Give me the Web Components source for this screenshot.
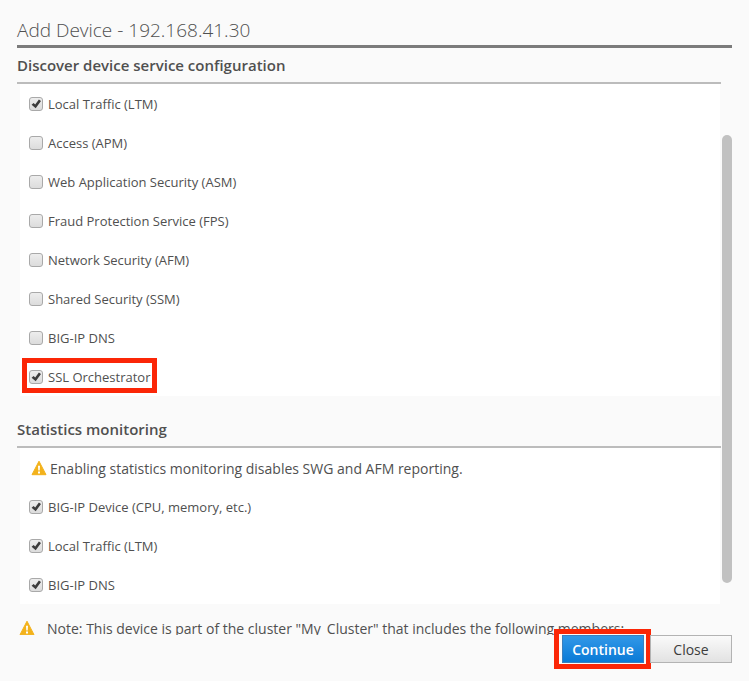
<!DOCTYPE html>
<html lang="en">
<head>
<meta charset="utf-8">
<title>Add Device</title>
<style>
  body {
    margin: 0;
    background: #fafafa;
    color: #505050;
    font-family: "Open Sans", "Noto Sans", sans-serif;
    font-size: 13px;
  }
</style>
</head>
<body>
  <device-dialog heading="Add Device - 192.168.41.30">
    <option-section heading="Discover device service configuration">
      <check-option checked>Local Traffic (LTM)</check-option>
      <check-option>Access (APM)</check-option>
      <check-option>Web Application Security (ASM)</check-option>
      <check-option>Fraud Protection Service (FPS)</check-option>
      <check-option>Network Security (AFM)</check-option>
      <check-option>Shared Security (SSM)</check-option>
      <check-option>BIG-IP DNS</check-option>
      <check-option checked marked>SSL Orchestrator</check-option>
    </option-section>
    <option-section heading="Statistics monitoring">
      <warning-note inset>Enabling statistics monitoring disables SWG and AFM reporting.</warning-note>
      <check-option checked>BIG-IP Device (CPU, memory, etc.)</check-option>
      <check-option checked>Local Traffic (LTM)</check-option>
      <check-option checked>BIG-IP DNS</check-option>
    </option-section>
    <warning-note>Note: This device is part of the cluster "My_Cluster" that includes the following members:</warning-note>
    <dialog-button slot="actions" primary marked>Continue</dialog-button>
    <dialog-button slot="actions">Close</dialog-button>
  </device-dialog>

<script>
class DeviceDialog extends HTMLElement {
  constructor() {
    super();
    this.attachShadow({ mode: "open" });
    this.shadowRoot.innerHTML = `
    <style>
        :host {
            display: flex;
            flex-direction: column;
            box-sizing: border-box;
            height: 100vh;
            padding: 16px 17px 18px;
        }
        h1 {
            margin: 0;
            font-size: 19px;
            line-height: 29px;
            font-weight: 300;
            white-space: nowrap;
            border-bottom: 3px solid #7b7b7b;
        }
        .body {
            flex: 1;
            min-height: 0;
            display: flex;
            gap: 1px;
        }
        .content {
            flex: 1;
            min-width: 0;
            overflow: hidden;
        }
        .track {
            width: 10px;
            display: flex;
            padding: 87px 0 52px;
        }
        .thumb {
            flex: 1;
            border-radius: 5px;
            background: #c1c1c1;
        }
        footer {
            display: flex;
            justify-content: flex-end;
            gap: 6px;
        }
    </style>
    <h1></h1>
    <div class="body">
        <div class="content"><slot></slot></div>
        <div class="track"><div class="thumb"></div></div>
    </div>
    <footer><slot name="actions"></slot></footer>
`;
    this.shadowRoot.querySelector("h1").textContent = this.getAttribute("heading");
  }
}

class OptionSection extends HTMLElement {
  constructor() {
    super();
    this.attachShadow({ mode: "open" });
    this.shadowRoot.innerHTML = `
    <style>
        :host {
            display: block;
            margin-bottom: 16px;
        }
        h2 {
            margin: 0;
            font-size: 15px;
            line-height: 34px;
            font-weight: 600;
            border-bottom: 2px solid #bcbcbc;
        }
        .panel {
            margin: 0 1px 0 3px;
            padding-left: 9px;
            background: white;
        }
    </style>
    <h2></h2>
    <div class="panel"><slot></slot></div>
`;
    this.shadowRoot.querySelector("h2").textContent = this.getAttribute("heading");
  }
}

class CheckOption extends HTMLElement {
  constructor() {
    super();
    this.attachShadow({ mode: "open" });
    this.shadowRoot.innerHTML = `
    <style>
        :host {
            display: flex;
            align-items: center;
            height: 39px;
        }
        label {
            position: relative;
            display: flex;
            align-items: center;
            gap: 5px;
            line-height: 18px;
        }
        .box {
            display: grid;
        }
        .box > * {
            grid-area: 1 / 1;
        }
        input {
            appearance: none;
            box-sizing: border-box;
            width: 14px;
            height: 14px;
            margin: 0;
            border: 1px solid #a9a9a9;
            border-radius: 3px;
            background: linear-gradient(#ededed, #dcdcdc);
        }
        svg {
            width: 14px;
            height: 14px;
            pointer-events: none;
            visibility: hidden;
        }
        input:checked + svg {
            visibility: visible;
        }
        /* Red callout drawn around the row */
        :host([marked]) label::after {
            content: "";
            position: absolute;
            inset: -10px -7px -7px;
            border: 5px solid #fb2607;
        }
    </style>
    <label>
        <span class="box">
            <input type="checkbox">
            <svg viewBox="0 0 14 14"><path d="M2.6 7.8 4.6 6l1.6 1.6L9.9 2.4l2.1 1.5-5.3 7.4z" fill="#3c3c3c"/></svg>
        </span>
        <slot></slot>
    </label>
`;
    this.shadowRoot.querySelector("input").checked = this.hasAttribute("checked");
  }
}

class WarningNote extends HTMLElement {
  constructor() {
    super();
    this.attachShadow({ mode: "open" });
    this.shadowRoot.innerHTML = `
    <style>
        :host {
            display: flex;
            align-items: center;
            gap: 12px;
            padding-left: 2px;
            font-size: 14px;
            line-height: 18px;
            white-space: nowrap;
        }
        :host([inset]) {
            gap: 3px;
            height: 41px;
            margin-bottom: -2px;
        }
        svg {
            flex: none;
            width: 16px;
            height: 16px;
            margin-bottom: 2px;
        }
    </style>
    <svg viewBox="0 0 16 16" aria-hidden="true">
        <path d="M8 1.2 15 14.7H1z" fill="#f3b21b" stroke="#f3b21b" stroke-width="1" stroke-linejoin="round"/>
        <path d="M7 5.8h2L8.7 10.6H7.3zM7 11.5h2v2H7z" fill="white"/>
    </svg>
    <slot></slot>
`;
  }
}

class DialogButton extends HTMLElement {
  constructor() {
    super();
    this.attachShadow({ mode: "open" });
    this.shadowRoot.innerHTML = `
    <style>
        :host {
            display: block;
            position: relative;
        }
        button {
            display: block;
            box-sizing: border-box;
            width: 82px;
            height: 28px;
            padding: 0;
            border: 1px solid #b3b3b3;
            background: linear-gradient(#fafafa, #e2e2e2);
            color: #3c3c3c;
            font: inherit;
            font-size: 14px;
        }
        :host([primary]) button {
            border-color: #3a7fbd;
            background: linear-gradient(#3298e8, #0a7ad6);
            color: white;
            font-weight: 600;
        }
        /* Red callout drawn around the button */
        :host([marked])::after {
            content: "";
            position: absolute;
            inset: -6px -7px -6px -8px;
            border: 5px solid #fb2607;
            pointer-events: none;
        }
    </style>
    <button type="button"><slot></slot></button>
`;
  }
}

customElements.define("device-dialog", DeviceDialog);
customElements.define("option-section", OptionSection);
customElements.define("check-option", CheckOption);
customElements.define("warning-note", WarningNote);
customElements.define("dialog-button", DialogButton);
</script>
</body>
</html>
